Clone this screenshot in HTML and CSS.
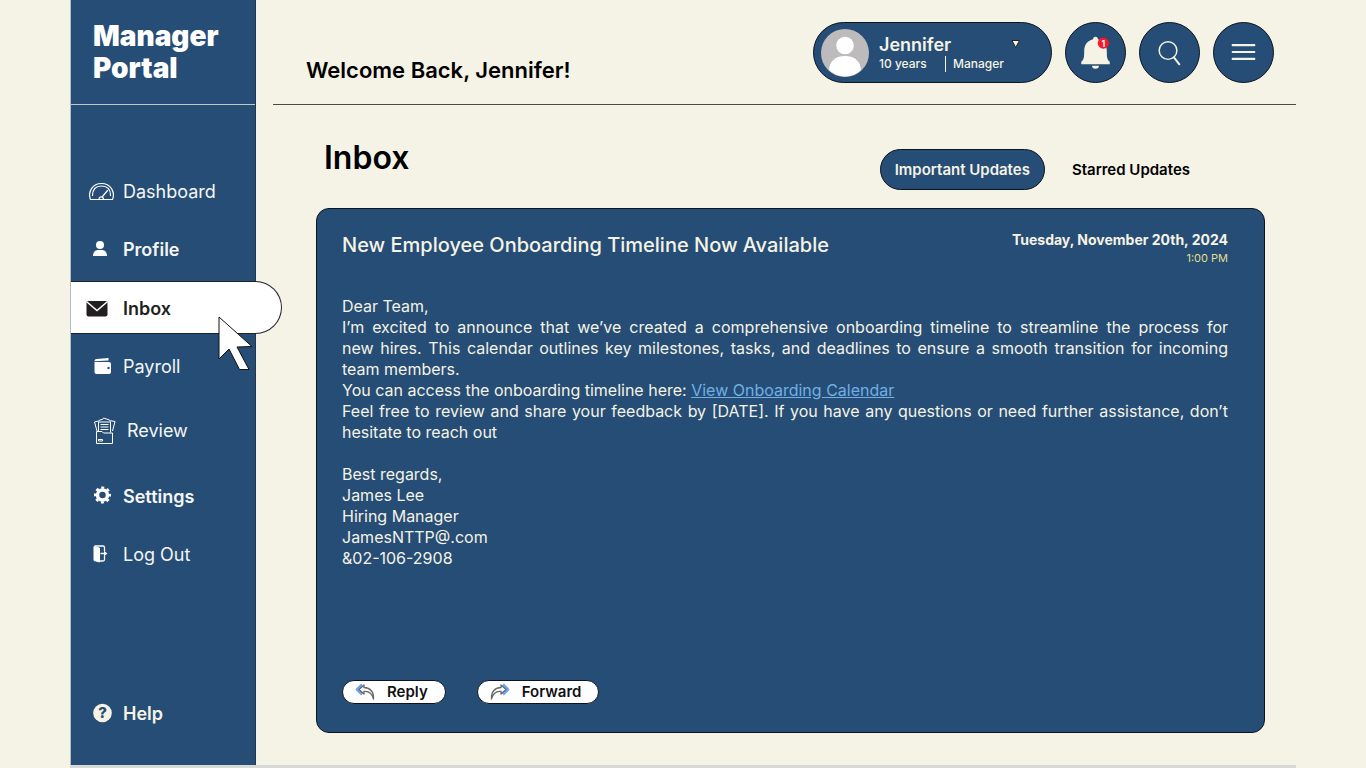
FILE: index.html
```html
<!DOCTYPE html>
<html lang="en">
<head>
<meta charset="utf-8">
<meta name="viewport" content="width=device-width, initial-scale=1">
<title>Manager Portal – Inbox</title>
<link rel="stylesheet" href="styles.css">
</head>
<body>
<div class="app">
  <aside class="sidebar">
    <div class="brand">Manager<br>Portal</div>
    <nav class="nav" aria-label="Main">
      <a class="nav-item" href="#dashboard">
        <svg class="nav-icon" viewBox="0 0 32 32" fill="none" stroke="#fff" stroke-width="1.2" stroke-linecap="round" stroke-linejoin="round"><path d="M4.500 24.500C1.500 17 6.500 8.500 15.500 8.500S29.500 17 26.500 24.500Z"/><path d="M6.500 20.500C6.500 14 10 11 15.500 11S24.500 14 24.500 20.500"/><path d="M16.500 21.500l5-6M13 24a2.200 2.200 0 0 1 4.400 0"/></svg>
        Dashboard</a>
      <a class="nav-item strong" href="#profile">
        <svg class="nav-icon" viewBox="0 0 32 32" fill="#fff"><circle cx="14" cy="12" r="4"/><path d="M7 23c0-4 2.500-6 5-6h4c2.500 0 5 2 5 6z"/></svg>
        Profile</a>
      <a class="nav-item active" href="#inbox" aria-current="page">
        <svg class="nav-icon" viewBox="0 0 32 32"><rect x="0.500" y="8" width="21" height="15.500" rx="2" fill="#231f20"/><path d="M1 9l10 8.500L21 9" fill="none" stroke="#fff" stroke-width="1.500"/></svg>
        Inbox
        <svg class="cursor" viewBox="0 0 36 55" aria-hidden="true"><path d="M1 1v42l10-10 10.500 20.500h9.500L19 31l15-.5z" fill="#fff" stroke="#111" stroke-width="1"/></svg>
      </a>
      <a class="nav-item" href="#payroll">
        <svg class="nav-icon" viewBox="0 0 32 32" fill="#fff"><path d="M8.500 11.300c0-1.500 1-2 2-2.200L22.500 8v2.500z"/><path d="M8.500 12h14.500a2 2 0 0 1 2 2v8a2 2 0 0 1-2 2H10.500a2 2 0 0 1-2-2z"/><circle cx="22.500" cy="18" r="1.200" fill="#264d75"/></svg>
        Payroll</a>
      <a class="nav-item review" href="#review">
        <svg class="nav-icon" viewBox="0 0 32 32" fill="none" stroke="#fff" stroke-width="1"><path d="M10.500 17.500h5.500l1.500 1.500h9v10.500h-16zM12.500 25.500h4v1.500h-4z"/><path d="M12.500 17V8h12v10.500M14.500 10.500h8M14.500 13h8M14.500 15.500h8"/><path d="M11 17L8.500 8l4-1M26.500 17l2.500-9.500-4.500-.8M12.500 7.500l1-1.500 3-.5 1-1.500 6 2 1 1.500"/></svg>
        Review</a>
      <a class="nav-item strong settings" href="#settings">
        <svg class="nav-icon" viewBox="0 0 32 32"><circle cx="16.500" cy="15" r="5" fill="none" stroke="#fff" stroke-width="3.500"/><circle cx="16.500" cy="15" r="7.400" fill="none" stroke="#fff" stroke-width="2.200" stroke-dasharray="3 2.812" stroke-dashoffset="1.500"/></svg>
        Settings</a>
      <a class="nav-item logout" href="#logout">
        <svg class="nav-icon" viewBox="0 0 32 32"><path d="M8 8.500l5.500 1.500v14L8 22.500z" fill="#fff" stroke="#fff" stroke-linejoin="round"/><path d="M8.500 8H17a1.500 1.500 0 0 1 1.500 1.500V13M13.500 23H17a1.500 1.500 0 0 0 1.500-1.500V18" fill="none" stroke="#fff" stroke-width="1.300"/><path d="M14.500 14.800h3.500v-2.100l3.500 2.800-3.500 2.800v-2.100h-3.500z" fill="#fff"/></svg>
        Log Out</a>
      <a class="nav-item strong help" href="#help">
        <svg class="nav-icon" viewBox="0 0 32 32"><circle cx="16.500" cy="16" r="9.300" fill="#f5f3e6"/><text class="help-mark" x="16.500" y="21" text-anchor="middle">?</text></svg>
        Help</a>
    </nav>
  </aside>

  <main class="main">
    <header class="topbar">
      <p class="welcome">Welcome Back, Jennifer!</p>
      <div class="tools">
        <button class="user" type="button">
          <svg class="avatar" viewBox="0 0 48 48"><defs><clipPath id="face"><circle cx="24" cy="24" r="23.500"/></clipPath></defs><circle cx="24" cy="24" r="24" fill="#bdbbbb"/><g clip-path="url(#face)" fill="#fff"><circle cx="24" cy="16.500" r="8.800"/><path d="M8 50v-8c0-9 6-15 16-15s16 6 16 15v8z"/></g></svg>
          <span class="user-text">
            <span class="user-name">Jennifer</span>
            <span class="user-meta"><span class="years">10 years</span><span class="role">Manager</span></span>
          </span>
          <svg class="caret" viewBox="0 0 10 10"><path d="M1 1.500h7.500L4.700 8.500z" fill="#f5f3e6" stroke="#222"/></svg>
        </button>
        <button class="round" type="button" aria-label="Notifications, 1 new">
          <svg viewBox="0 0 60 60"><path d="M30 14c1.500 0 2.500 1 2.500 2.500 6 1.500 9 6 9 12 0 7 .5 9 3 11V42h-29v-2.500c2.500-2 3-4 3-11 0-6 3-10.500 9-12C27.500 15 28.500 14 30 14zM26.500 43.500h7a3.500 3 0 0 1-7 0z" fill="#f5f3e6"/><circle cx="38" cy="20.500" r="5.700" fill="#fb1628"/><text class="badge-number" x="38" y="24" text-anchor="middle">1</text></svg>
        </button>
        <button class="round" type="button" aria-label="Search">
          <svg viewBox="0 0 60 60" fill="none" stroke="#f5f3e6" stroke-linecap="round"><circle cx="28.500" cy="28" r="9" stroke-width="1.500"/><path d="M34.500 35l5.500 7" stroke-width="2"/></svg>
        </button>
        <button class="round" type="button" aria-label="Menu">
          <svg viewBox="0 0 60 60" stroke="#f5f3e6" stroke-width="2.200" stroke-linecap="round"><path d="M19 22.500h22M19 29.500h22M19 36.500h22"/></svg>
        </button>
      </div>
    </header>

    <section class="content">
      <div class="heading">
        <h1>Inbox</h1>
        <div class="tabs">
          <button class="tab selected" type="button">Important Updates</button>
          <button class="tab" type="button">Starred Updates</button>
        </div>
      </div>

      <article class="message">
        <div class="message-head">
          <h2>New Employee Onboarding Timeline Now Available</h2>
          <div class="stamp">
            <span class="date">Tuesday, November 20th, 2024</span>
            <span class="time">1:00 PM</span>
          </div>
        </div>
        <div class="body">
          <p>Dear Team,</p>
          <p>I’m excited to announce that we’ve created a comprehensive onboarding timeline to streamline the process for new&nbsp;hires. This calendar outlines key milestones, tasks, and deadlines to ensure a smooth transition for incoming team&nbsp;members.</p>
          <p>You can access the onboarding timeline here: <a href="#calendar">View Onboarding Calendar</a></p>
          <p>Feel free to review and share your feedback by [DATE]. If you have any questions or need further assistance, don’t hesitate to reach out</p>
          <p class="signature">Best regards,<br>James Lee<br>Hiring Manager<br>JamesNTTP@.com<br>&amp;02-106-2908</p>
        </div>
        <div class="actions">
          <button class="action" type="button">
            <svg viewBox="0 0 20 18" fill="none" stroke-linejoin="round"><path d="M7 1.500L2 6.500l5 5" stroke="#6ba4f5" stroke-width="2.500"/><path d="M9 2L4 6.500 9 11V8.500c4.500-.5 8 2 9.500 7.500C19 9 15.500 4.800 9 4.500z" fill="#fff" stroke="#666" stroke-width="1.300"/></svg>
            Reply</button>
          <button class="action" type="button">
            <svg viewBox="0 0 20 18" fill="none" stroke-linejoin="round"><path d="M13 1.500l5 5-5 5" stroke="#6ba4f5" stroke-width="2.500"/><path d="M11 2l5 4.500-5 4.500V8.500C6.500 8 3 10.500 1.500 16 1 9 4.500 4.800 11 4.500z" fill="#fff" stroke="#666" stroke-width="1.300"/></svg>
            Forward</button>
        </div>
      </article>
    </section>
  </main>
</div>
</body>
</html>
```
FILE: styles.css
```css
* { box-sizing: border-box; }

:root {
  --navy: #264d75;
  --cream: #f5f3e6;
  --ink: #0c1420;
}

body {
  margin: 0;
  background: var(--cream);
  color: #000;
  font-family: Inter, "Liberation Sans", sans-serif;
}

h1, h2, p { margin: 0; }
button { font: inherit; color: inherit; cursor: pointer; }

.app {
  display: flex;
  min-height: 100vh;
  margin: 0 70px;
  border-bottom: 3px solid #d8d8d8;
}

/* Sidebar */
.sidebar {
  display: flex;
  flex-direction: column;
  flex: 0 0 186px;
  background: var(--navy);
  color: #fff;
  border-left: 1px solid #b4bdc4;
  border-right: 1px solid #22364c;
}

.brand {
  height: 105px;
  padding: 20px 22px 0;
  border-bottom: 1px solid #c4c6c4;
  font-size: 28px;
  line-height: 32px;
  font-weight: 900;
}

.nav {
  display: flex;
  flex-direction: column;
  flex: 1;
  padding: 57px 0 23px;
}

.nav-item {
  display: flex;
  align-items: center;
  gap: 5px;
  flex: none;
  height: 58px;
  padding-left: 15px;
  color: #f5f6f4;
  font-size: 18px;
  text-decoration: none;
}

.nav-icon { width: 32px; height: 32px; }
.strong { font-weight: 600; }

.active {
  position: relative;
  width: calc(100% + 27px);
  height: 53px;
  margin: 3px 0;
  padding-top: 2px;
  border: 1px solid #222;
  border-left: 0;
  border-radius: 0 27px 27px 0;
  background: #fff;
  color: #231f20;
  font-weight: 600;
}

.cursor {
  position: absolute;
  left: 147px;
  top: 34px;
  width: 36px;
  height: 55px;
}

.review { height: 70px; gap: 9px; }
.settings { height: 62px; }
.logout { height: 54px; }
.help { margin-top: auto; color: var(--cream); }
.help-mark { font-size: 15px; font-weight: 800; fill: var(--navy); }

/* Top bar */
.main {
  display: flex;
  flex-direction: column;
  flex: 1;
  min-width: 0;
  padding-left: 17px;
}

.topbar {
  display: flex;
  justify-content: space-between;
  height: 105px;
  padding: 22px 22px 0 33px;
  border-bottom: 1px solid #4a4a46;
}

.welcome {
  padding-top: 34px;
  font-size: 22px;
  line-height: 28px;
  font-weight: 600;
}

.tools { display: flex; gap: 13px; }

.user,
.round {
  height: 61px;
  padding: 0;
  border: 1px solid var(--ink);
  border-radius: 31px;
  background: var(--navy);
  color: var(--cream);
}

.user {
  display: flex;
  align-items: center;
  width: 239px;
  padding: 0 30px 0 7px;
  text-align: left;
}

.avatar { width: 48px; height: 48px; margin-right: 10px; }
.user-text { display: flex; flex-direction: column; flex: 1; }
.user-name { font-size: 18px; line-height: 22px; font-weight: 600; }
.user-meta { display: flex; font-size: 12px; line-height: 16px; font-weight: 500; }
.years { width: 66px; }
.role { padding-left: 7px; border-left: 1px solid var(--cream); }
.caret { width: 10px; height: 10px; margin: -18px 0 0 -20px; }

.round { width: 61px; }
.round svg { display: block; width: 100%; }
.badge-number { font-size: 9px; font-weight: 700; fill: #fff; }

/* Inbox */
.content {
  display: flex;
  flex-direction: column;
  flex: 1;
  padding: 33px 31px 32px 43px;
}

.heading {
  display: flex;
  justify-content: space-between;
  height: 70px;
  padding: 0 60px 0 8px;
}

h1 { font-size: 32px; line-height: 40px; font-weight: 600; }

.tabs { display: flex; align-items: flex-start; padding-top: 11px; }

.tab {
  height: 41px;
  padding: 0 14px;
  border: 1px solid transparent;
  border-radius: 21px;
  background: none;
  font-size: 15px;
  font-weight: 600;
}

.selected {
  margin-right: 12px;
  border-color: var(--ink);
  background: var(--navy);
  color: var(--cream);
}

.message {
  display: flex;
  flex-direction: column;
  flex: 1;
  padding: 22px 36px 28px 25px;
  border: 1px solid var(--ink);
  border-radius: 13px;
  background: var(--navy);
  color: var(--cream);
}

.message-head { display: flex; justify-content: space-between; }
h2 { font-size: 20px; line-height: 28px; font-weight: 500; }
.stamp { display: flex; flex-direction: column; align-items: flex-end; }
.date { font-size: 14px; line-height: 18px; font-weight: 700; }
.time { font-size: 11px; line-height: 18px; color: #e3de8f; }

.body {
  padding-top: 29px;
  font-size: 16px;
  line-height: 21px;
  text-align: justify;
}

.body a { color: #6fb0e6; }
.signature { padding-top: 21px; }

.actions {
  display: flex;
  gap: 31px;
  margin-top: auto;
}

.action {
  display: flex;
  align-items: center;
  gap: 12px;
  height: 24px;
  padding: 0 17px 1px 12px;
  border: 1px solid var(--ink);
  border-radius: 12px;
  background: #fff;
  color: #111;
  font-size: 15px;
  font-weight: 600;
}

.action svg { width: 20px; height: 18px; }
```
